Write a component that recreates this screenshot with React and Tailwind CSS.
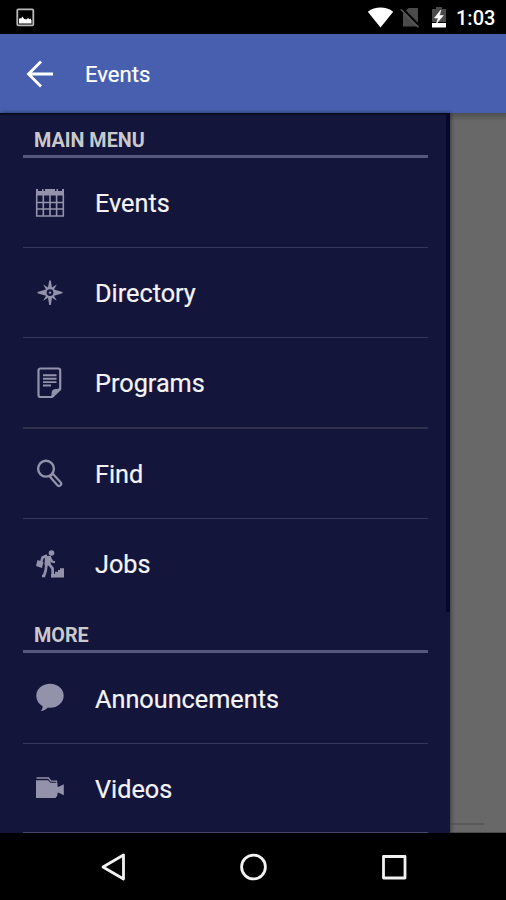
const mainMenu = [
  { label: 'Events', icon: CalendarIcon, row: 'h-[90px] border-b border-[#35365c]' },
  { label: 'Directory', icon: CompassIcon, row: 'h-[90px] border-b border-[#35365c]' },
  { label: 'Programs', icon: NoteIcon, row: 'h-[91px] border-b-2 border-[#303149]' },
  { label: 'Find', icon: SearchIcon, row: 'h-[90px] border-b border-[#35365c]' },
  { label: 'Jobs', icon: JobsIcon, row: 'h-[89px]' },
]

const moreMenu = [
  { label: 'Announcements', icon: BubbleIcon, row: 'h-[91px] border-b border-[#35365c]' },
  { label: 'Videos', icon: VideoIcon, row: 'h-[89px] border-b border-[#45466a]' },
]

function CalendarIcon() {
  return (
    <svg width="30" height="30" viewBox="0 0 30 30" fill="none" stroke="currentColor">
      <path d="M1 1h2v2h4V1h1.500v2H10V1h10v2h1.500V1H23v2h4V1h2v6.500H1z" fill="currentColor" stroke="none" />
      <path d="M1.700 6v22h26.600V6M8.300 7v21M15 7v21M21.600 7v21M1.500 14.500h27M1.500 21h27" strokeWidth="1.600" />
    </svg>
  )
}

function CompassIcon() {
  return (
    <svg width="30" height="30" viewBox="0 0 30 30" fill="currentColor">
      <path
        fillRule="evenodd"
        d="M14.200 2.500h1.600l1.200 7 4.800-3-2.800 5 8.500 2.400v1.400l-8.500 2.400 2.800 5-4.800-3-1.200 7.300h-1.600l-1.200-7.300-4.800 3 2.800-5-8.500-2.400v-1.400l8.500-2.400-2.800-5 4.800 3zM15 11.200a3.400 3.400 0 1 0 0 6.800 3.400 3.400 0 0 0 0-6.800z"
      />
      <circle cx="15" cy="14.600" r="1.200" />
    </svg>
  )
}

function NoteIcon() {
  return (
    <svg width="30" height="32" viewBox="0 0 30 32" fill="none" stroke="currentColor">
      <path d="M17 30H5.500a2 2 0 0 1-2-2V3.500a2 2 0 0 1 2-2h17.700a2 2 0 0 1 2 2V22z" strokeWidth="2.200" />
      <path d="M8 8.300h13.500M8 11.700h13.500M8 15.100h13.500M8 18.500h8" strokeWidth="1.900" />
      <path d="M15.500 30.500c2-2 .2-5.500 2.300-7.500 2-1.700 5.200-.3 8.200-2.500v2.200l-8.500 8.300z" fill="currentColor" stroke="none" />
    </svg>
  )
}

function SearchIcon() {
  return (
    <svg width="30" height="30" viewBox="0 0 30 30" fill="none" stroke="currentColor">
      <circle cx="11" cy="9.700" r="7.900" strokeWidth="2.400" />
      <path
        d="M14.800 17.600l3-2.800 8 8.600c1.500 1.800-1.100 4.700-3.200 3z"
        strokeWidth="2.200"
        strokeLinejoin="round"
      />
    </svg>
  )
}

function JobsIcon() {
  return (
    <svg width="30" height="30" viewBox="0 0 30 30" fill="none" stroke="currentColor">
      <circle cx="16.500" cy="4" r="2.800" fill="currentColor" stroke="none" />
      <path d="M13 6.800L12.500 16.500" strokeWidth="6" />
      <path d="M12 6.500L7.500 8.500l-1.500 5" strokeWidth="2.500" />
      <path d="M15 8.500l2 4 3 .7" strokeWidth="2.200" />
      <path d="M11.500 15l-.8 6.500L9 27H7M14 15l3.500 4.300.3 7.700H19" strokeWidth="2.700" />
      <path d="M2.500 11l6 2-1.500 6-6-2z" fill="currentColor" stroke="none" />
      <path d="M16 28.500v-3.500h4v-2.300h3V21h2v-1.700h4v9.200z" fill="currentColor" stroke="none" />
    </svg>
  )
}

function BubbleIcon() {
  return (
    <svg width="30" height="30" viewBox="0 0 30 30" fill="currentColor">
      <path d="M15 .8c7.700 0 13.700 5.100 13.700 11.900S22.700 24.800 15 24.800c-.8 0-1.500 0-2.200-.2C11 26.800 8.500 28 5.500 28c1.700-1.300 2.300-2.800 2-5C3.700 20.800 1.300 17 1.300 12.700 1.300 5.900 7.300.8 15 .8z" />
    </svg>
  )
}

function VideoIcon() {
  return (
    <svg width="30" height="30" viewBox="0 0 30 30" fill="currentColor">
      <path d="M1 7.300h12l2.500 2.500h7v4h1.300l5-2.500v11l-5-2.500h-1.300v2.500l-2 2.700H1z" />
      <path d="M1.500 5h12l2.500 3.200h5.500v1.500" fill="none" stroke="currentColor" strokeWidth="1.300" />
    </svg>
  )
}

function StatusBar() {
  return (
    <div className="flex h-[34px] items-center bg-black pl-4 pr-[11px]">
      <svg width="19" height="19" viewBox="0 0 19 19" fill="none">
        <rect x="1.300" y="1.300" width="16" height="16" rx="1" stroke="#b9b9b9" strokeWidth="1.800" />
        <path d="M3 15.500v-4.500l1-1 1 .5 1.500-2 1.700 2.500 2 .5 2-1.500 1 1.200 1.500-.7.800 2v3z" fill="#fff" />
      </svg>
      <div className="ml-auto flex items-center">
        <svg width="28" height="22" viewBox="0 0 28 22" fill="#fff">
          <path d="M.8 5.800C8.100.2 18.900.2 26.200 5.800L13.500 21.500z" />
        </svg>
        <svg className="ml-[5px]" width="21" height="22" viewBox="0 0 21 22">
          <path d="M8.500 2H18v18.500H3V7.500z" fill="#4b4b4b" />
          <path d="M2 2.500L20 21" stroke="#000" strokeWidth="3" />
          <path d="M.8 3.300L18.500 21.300" stroke="#5d5d5d" strokeWidth="1.500" />
        </svg>
        <svg className="ml-[10px]" width="16" height="22" viewBox="0 0 16 22">
          <path d="M1 3h4V1h6v2h4v13H1z" fill="#4b4b4b" />
          <path d="M1 17h14v4.500H1z" fill="#fff" />
          <path d="M9.800 4L3.500 12h3.700L5.500 17.500l6.800-8H8.500z" fill="#fff" stroke="#fff" strokeWidth="0.600" />
        </svg>
        <span className="ml-[9px] w-[39px] whitespace-nowrap pt-[2px] text-[20px] font-medium leading-6 text-white">1:03</span>
      </div>
    </div>
  )
}

function Toolbar() {
  return (
    <div className="flex h-[79px] items-center bg-[#475fae] pl-[26px]">
      <svg width="28" height="28" viewBox="0 0 28 28" fill="none" stroke="#fff" strokeWidth="2.800">
        <path d="M27 14H2.500M15 1.500L2.500 14 15 26.500" />
      </svg>
      <h1 className="ml-[31px] pt-[2px] text-[22.100px] text-white [-webkit-text-stroke:0.200px]">Events</h1>
    </div>
  )
}

function SectionTitle({ children }) {
  return (
    <h2 className="flex h-[45px] items-center border-b-3 border-[#56577c] pl-[11px] pt-[13px] text-[19.750px] font-bold text-[#c9c9cb]">
      {children}
    </h2>
  )
}

function MenuItem({ item }) {
  const Icon = item.icon
  return (
    <li className={`flex items-center pl-[12px] text-[#9293ab] ${item.row}`}>
      <Icon />
      <span className="ml-[30px] pt-[3px] text-[25.250px] leading-8 text-[#f4f4f6] [-webkit-text-stroke:0.200px]">
        {item.label}
      </span>
    </li>
  )
}

function Drawer() {
  return (
    <nav className="relative h-full w-[450px] overflow-hidden bg-[#14153b] pl-[23px] pr-[22px] shadow-[1px_0_4px_rgba(0,0,0,0.45)]">
      <SectionTitle>MAIN MENU</SectionTitle>
      <ul>
        {mainMenu.map((item) => (
          <MenuItem key={item.label} item={item} />
        ))}
      </ul>
      <SectionTitle>MORE</SectionTitle>
      <ul>
        {moreMenu.map((item) => (
          <MenuItem key={item.label} item={item} />
        ))}
      </ul>
      {/* scroll bar and the toolbar's edge lie over the list */}
      <div className="absolute right-0 top-0 h-[499px] w-[4px] bg-[#06072a]" />
      <div className="absolute inset-x-0 top-0 h-[3px] bg-gradient-to-b from-[#04051c] to-transparent" />
    </nav>
  )
}

function NavBar() {
  return (
    <div className="flex h-[67px] items-center justify-between bg-black pl-[100px] pr-[98px]">
      <svg width="28" height="30" viewBox="0 0 28 30" fill="none" stroke="#f2f2f2" strokeWidth="2.800" strokeLinejoin="round">
        <path d="M23.500 3v24L3 15z" />
      </svg>
      <svg width="28" height="28" viewBox="0 0 28 28" fill="none" stroke="#f2f2f2" strokeWidth="2.800">
        <circle cx="13.500" cy="14" r="11.900" />
      </svg>
      <svg width="28" height="28" viewBox="0 0 28 28" fill="none" stroke="#f2f2f2" strokeWidth="2.800" strokeLinejoin="round">
        <rect x="3.500" y="3.500" width="21.500" height="21.500" />
      </svg>
    </div>
  )
}

export default function App() {
  return (
    <div className="flex h-[900px] w-[506px] flex-col overflow-hidden bg-black font-[Roboto,sans-serif]">
      <StatusBar />
      <Toolbar />
      <main className="flex h-[720px] bg-[#686868]">
        <Drawer />
        <div className="flex flex-1 flex-col justify-end border-b border-[#4c4c4c] bg-gradient-to-b from-[#4f4f4f] to-transparent bg-[length:100%_8px] bg-no-repeat pb-[7px]">
          <div className="ml-[2px] h-[2px] w-[32px] bg-[#5a5a5a]" />
        </div>
      </main>
      <NavBar />
    </div>
  )
}
